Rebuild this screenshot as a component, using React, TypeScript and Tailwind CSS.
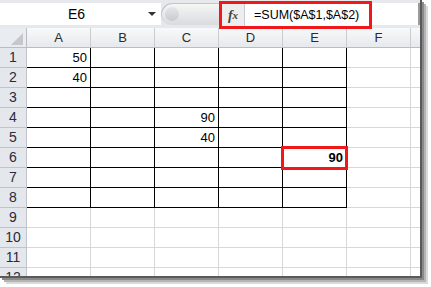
import React from "react";

const cols = ["A", "B", "C", "D", "E", "F"];
const rows = [1, 2, 3, 4, 5, 6, 7, 8, 9, 10, 11, 12];

const values: Record<string, string> = {
  A1: "50",
  A2: "40",
  C4: "90",
  C5: "40",
  E6: "90",
};

function Cell({ col, row }: { col: string; row: number }) {
  const key = col + row;
  const boxed = row <= 8 && col !== "F";
  const value = values[key];
  const selected = key === "E6";
  return (
    <div
      className={
        "relative flex h-[20px] w-[64px] shrink-0 items-end justify-end border-b border-r pb-[3px] pr-[3px] text-[13px] leading-none text-black " +
        (boxed ? "border-black" : "border-[#d8d8d8]") +
        (selected ? " font-bold" : "")
      }
    >
      {value}
      {selected ? (
        <div className="absolute left-[-2px] top-[-2px] z-10 h-[24px] w-[67px] border-[3px] border-[#f01818]" />
      ) : null}
    </div>
  );
}

export default function App() {
  return (
    <div className="h-[287px] w-[431px] overflow-hidden bg-white font-['Liberation_Sans',Arial,sans-serif]">
      <div className="relative h-[278px] w-[422px] overflow-hidden border-b-[2px] border-r-[2px] border-[#5a5a5a] bg-white shadow-[2px_2px_0_#8a8a8a,4px_4px_0_#b4b4b4,6px_6px_0_#dadada]">
        {/* formula bar */}
        <div className="flex h-[28px] items-start bg-[#e6e8eb]">
          <div className="mt-[3px] flex h-[22px] w-[161px] items-center bg-white">
            <span className="flex-1 pl-[6px] text-center text-[14px] text-black">E6</span>
            <svg width="10" height="6" viewBox="0 0 10 6" className="mr-[4px]">
              <path d="M1 1 L9 1 L5 5 Z" fill="#333" />
            </svg>
          </div>
          <div className="mt-[3px] flex h-[22px] w-[58px] items-center rounded-l-full bg-gradient-to-b from-[#f7f7f7] to-[#d9dbde] pl-[4px] shadow-[inset_1px_1px_0_#c4c6c9]">
            <div className="h-[14px] w-[14px] rounded-full bg-gradient-to-b from-[#e4e6e9] to-[#c9cccf]" />
          </div>
          <div className="relative z-10 mt-[1px] flex h-[28px] w-[153px] border-[3px] border-[#f01818] bg-white">
            <div className="flex w-[23px] items-center justify-center border-r border-[#c8cacd] bg-[#eceef0] font-['Liberation_Serif',serif] text-[14px] font-bold italic text-[#444]">
              f<span className="text-[11px]">x</span>
            </div>
            <div className="flex flex-1 items-center pl-[9px] text-[12.5px] text-black">=SUM($A$1,$A$2)</div>
          </div>
          <div className="mt-[3px] h-[22px] flex-1 border-r-[2px] border-[#9a9a9a] bg-white" />
        </div>

        {/* column headers */}
        <div className="flex h-[20px] border-b border-[#b9bdc3]">
          <div className="relative h-full w-[27px] shrink-0 border-r border-[#b9bdc3] bg-[#e9ecf0]">
            <svg width="12" height="12" viewBox="0 0 12 12" className="absolute bottom-[2px] right-[3px]">
              <path d="M12 0 L12 12 L0 12 Z" fill="#c4c8cd" />
            </svg>
          </div>
          {cols.map((c) => (
            <div
              key={c}
              className="flex h-full w-[64px] shrink-0 items-center justify-center border-r border-[#c9ccd1] bg-gradient-to-b from-[#f8f9fa] to-[#e6e9ed] text-[13px] text-[#2c2c2c]"
            >
              {c}
            </div>
          ))}
          <div className="h-full flex-1 bg-gradient-to-b from-[#f8f9fa] to-[#e6e9ed]" />
        </div>

        {/* rows */}
        {rows.map((r) => (
          <div key={r} className="flex">
            <div className="flex h-[20px] w-[27px] shrink-0 items-center justify-center border-b border-r border-[#c0c4ca] bg-[#e4e8ed] text-[14px] text-[#2a2a3a]">
              {r}
            </div>
            {cols.map((c) => (
              <Cell key={c} col={c} row={r} />
            ))}
            <div className="h-[20px] flex-1 border-b border-[#d8d8d8]" />
          </div>
        ))}
      </div>
    </div>
  );
}
